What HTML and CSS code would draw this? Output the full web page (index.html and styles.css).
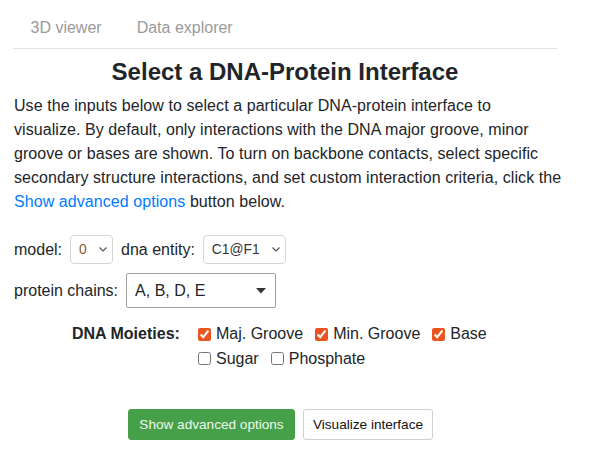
FILE: index.html
```html
<!DOCTYPE html>
<html>
<head>
<meta charset="utf-8">
<link rel="stylesheet" href="styles.css">
</head>
<body>
<div class="page">
  <nav class="tabs">
    <a class="tab">3D viewer</a>
    <a class="tab">Data explorer</a>
  </nav>
  <h3 class="title">Select a DNA-Protein Interface</h3>
  <p class="intro">Use the inputs below to select a particular DNA-protein interface to<br>visualize. By default, only interactions with the DNA major groove, minor<br>groove or bases are shown. To turn on backbone contacts, select specific<br>secondary structure interactions, and set custom interaction criteria, click the<br><a class="link">Show advanced options</a> button below.</p>

  <div class="row row-model">
    <span class="lbl">model:</span>
    <div class="sel sel-model"><span class="sel-val val-zero">0</span><svg class="chev" width="8" height="5" viewBox="0 0 8 5"><path d="M0.5 0.5 L4 4 L7.5 0.5" fill="none" stroke="#555" stroke-width="1.2"/></svg></div>
    <span class="lbl">dna entity:</span>
    <div class="sel sel-entity"><span class="sel-val">C1@F1</span><svg class="chev" width="8" height="5" viewBox="0 0 8 5"><path d="M0.5 0.5 L4 4 L7.5 0.5" fill="none" stroke="#555" stroke-width="1.2"/></svg></div>
  </div>

  <div class="row row-chains">
    <span class="lbl">protein chains:</span>
    <div class="chains"><span>A, B, D, E</span><svg class="caret" width="10" height="6" viewBox="0 0 10 6"><path d="M0 0 L10 0 L5 5.5 Z" fill="#333"/></svg></div>
  </div>

  <div class="moieties">
    <span class="m-label">DNA Moieties:</span>
    <div class="checks">
      <label class="chk"><input type="checkbox" checked><span>Maj. Groove</span></label>
      <label class="chk"><input type="checkbox" checked><span>Min. Groove</span></label>
      <label class="chk"><input type="checkbox" checked><span>Base</span></label>
      <label class="chk"><input type="checkbox"><span>Sugar</span></label>
      <label class="chk"><input type="checkbox"><span>Phosphate</span></label>
    </div>
  </div>

  <div class="buttons">
    <button class="btn btn-green">Show advanced options</button>
    <button class="btn btn-white">Visualize interface</button>
  </div>
</div>
</body>
</html>
```

FILE: styles.css
```css
* { box-sizing: border-box; }
html, body { margin: 0; padding: 0; background: #fff; }
body {
  font-family: "Liberation Sans", Arial, sans-serif;
  font-size: 16px;
  line-height: 24px;
  color: #212529;
}
.page {
  margin: 8px 0 0 13px;
  width: 544px;
}
.tabs {
  display: flex;
  border-bottom: 1px solid #dee2e6;
  height: 41px;
}
.tab {
  padding: 8px 17.5px;
  color: #9a9a9a;
  line-height: 24px;
}
.title {
  margin: 8px 0 0 0;
  font-size: 24px;
  line-height: 29px;
  font-weight: bold;
  text-align: center;
  color: #212529;
}
.intro {
  margin: 8px -12px 0 0;
  padding-left: 1px;
  letter-spacing: 0.07px;
}
.link { color: #007bff; }
.row {
  display: flex;
  align-items: center;
  gap: 8px;
  padding-left: 1px;
}
.row-model { margin-top: 21px; height: 29px; }
.row-chains { margin-top: 9px; height: 35px; }
.sel {
  display: flex;
  align-items: center;
  justify-content: space-between;
  height: 29px;
  border: 1px solid #d6d6d6;
  border-radius: 4px;
  padding: 0 5px 0 8px;
  font-size: 13.8px;
  color: #333;
  background: #fff;
}
.sel-model { width: 43px; }
.sel-entity { width: 83px; }
.val-zero { color: #8a5a2b; }
.chev { display: block; }
.chains {
  display: flex;
  align-items: center;
  justify-content: space-between;
  width: 150px;
  height: 35px;
  border: 1px solid #a0a0a0;
  border-radius: 2px;
  padding: 0 9px 0 8px;
  font-size: 16px;
  color: #212529;
}
.caret { display: block; }
.moieties {
  display: flex;
  margin-top: 14px;
  padding-left: 59px;
}
.m-label {
  width: 122px;
  font-weight: bold;
  flex: none;
}
.checks {
  display: flex;
  flex-wrap: wrap;
  width: 310px;
}
.chk {
  display: inline-flex;
  align-items: center;
  margin-right: 8px;
  height: 24.5px;
}
.chk input {
  width: 13px;
  height: 13px;
  margin: 0 5px 0 4px;
  accent-color: #e95420;
}
.buttons {
  display: flex;
  gap: 8px;
  margin-top: 38px;
  padding-left: 115px;
}
.btn {
  font-family: "Liberation Sans", Arial, sans-serif;
  font-size: 13.6px;
  height: 31px;
  padding: 0;
  border-radius: 3px;
  cursor: pointer;
  text-align: center;
}
.btn-green {
  width: 167px;
  background: #45a049;
  border: 1px solid #45a049;
  color: #eef7ee;
}
.btn-white {
  width: 130px;
  background: #fff;
  border: 1px solid #d0d0d0;
  color: #111;
}
```
